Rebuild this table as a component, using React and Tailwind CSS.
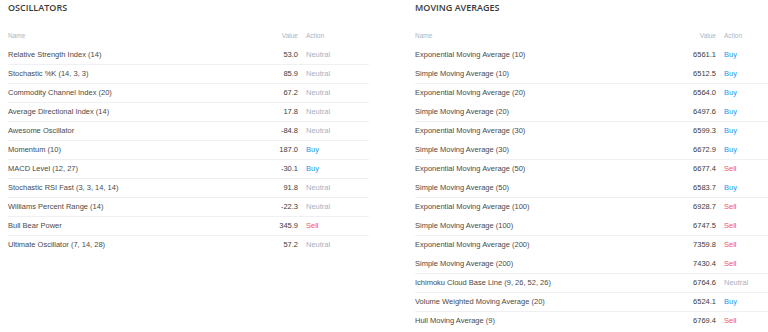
import React from "react";

const oscillators = [
  ["Relative Strength Index (14)", "53.0", "Neutral"],
  ["Stochastic %K (14, 3, 3)", "85.9", "Neutral"],
  ["Commodity Channel Index (20)", "67.2", "Neutral"],
  ["Average Directional Index (14)", "17.8", "Neutral"],
  ["Awesome Oscillator", "-84.8", "Neutral"],
  ["Momentum (10)", "187.0", "Buy"],
  ["MACD Level (12, 27)", "-30.1", "Buy"],
  ["Stochastic RSI Fast (3, 3, 14, 14)", "91.8", "Neutral"],
  ["Williams Percent Range (14)", "-22.3", "Neutral"],
  ["Bull Bear Power", "345.9", "Sell"],
  ["Ultimate Oscillator (7, 14, 28)", "57.2", "Neutral"],
];

const movingAverages = [
  ["Exponential Moving Average (10)", "6561.1", "Buy"],
  ["Simple Moving Average (10)", "6512.5", "Buy"],
  ["Exponential Moving Average (20)", "6564.0", "Buy"],
  ["Simple Moving Average (20)", "6497.6", "Buy"],
  ["Exponential Moving Average (30)", "6599.3", "Buy"],
  ["Simple Moving Average (30)", "6672.9", "Buy"],
  ["Exponential Moving Average (50)", "6677.4", "Sell"],
  ["Simple Moving Average (50)", "6583.7", "Buy"],
  ["Exponential Moving Average (100)", "6928.7", "Sell"],
  ["Simple Moving Average (100)", "6747.5", "Sell"],
  ["Exponential Moving Average (200)", "7359.8", "Sell"],
  ["Simple Moving Average (200)", "7430.4", "Sell"],
  ["Ichimoku Cloud Base Line (9, 26, 52, 26)", "6764.6", "Neutral"],
  ["Volume Weighted Moving Average (20)", "6524.1", "Buy"],
  ["Hull Moving Average (9)", "6769.4", "Sell"],
];

const actionColor = {
  Buy: "text-[#2196f3]",
  Sell: "text-[#f7525f]",
  Neutral: "text-[#a3b3c2]",
};

const Table = ({ title, rows, showLine, actionW, className }) => (
  <div className={className}>
    <h2 className="h-4 leading-4 font-['Open_Sans',sans-serif] text-[9px] font-semibold text-[#3a3a3a]">{title}</h2>
    <div className="mt-[9px] flex h-[21px] items-center text-[6.5px] text-[#a8b6c4]">
      <div className="flex-1">Name</div>
      <div className="w-[60px] text-right">Value</div>
      <div className={`${actionW} pl-[8px]`}>Action</div>
    </div>
    {rows.map(([name, value, action], i) => (
      <div
        key={name}
        className={`flex h-[19px] items-center text-[7.5px] ${
          showLine(i) ? "border-b border-[#eef0f3]" : "border-b border-transparent"
        }`}
      >
        <div className="flex-1 text-[#4a4a4a]">{name}</div>
        <div className="w-[60px] text-right text-[#3b3b3b]">{value}</div>
        <div className={`${actionW} pl-[8px] ${actionColor[action]}`}>{action}</div>
      </div>
    ))}
  </div>
);

const App = () => (
  <div className="flex h-[332px] w-[768px] bg-white pl-[8px] font-['Liberation_Sans',sans-serif]">
    <Table
      title="OSCILLATORS"
      rows={oscillators}
      showLine={(i) => i < oscillators.length - 1}
      actionW="w-[71px]"
      className="w-[361px]"
    />
    <Table
      title="MOVING AVERAGES"
      rows={movingAverages}
      showLine={(i) => i % 2 === 1 || i === 12 || i === 13}
      actionW="w-[52px]"
      className="ml-[46px] flex-1"
    />
  </div>
);

export default App;
